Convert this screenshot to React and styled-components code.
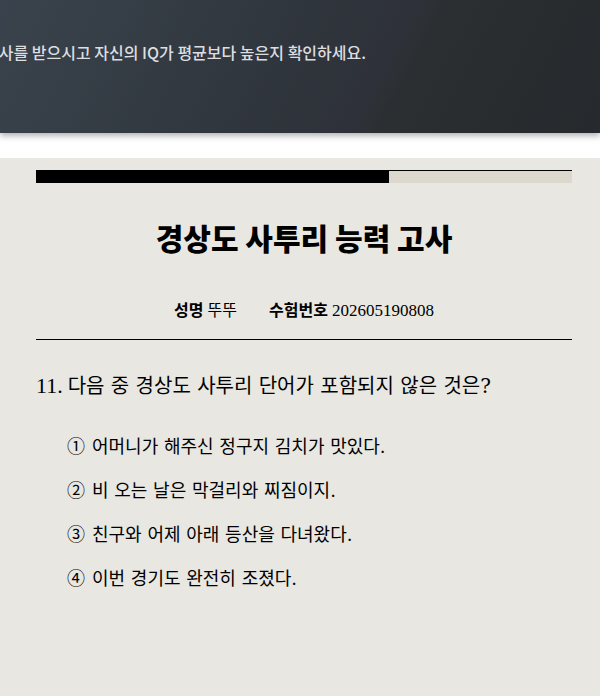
import React from "react";
import styled, { createGlobalStyle } from "styled-components";

const GlobalStyle = createGlobalStyle`
  *, *::before, *::after { box-sizing: border-box; }
  html, body { margin: 0; background: #fff; }
  body, button { font-family: "Liberation Serif", "Noto Sans CJK KR", serif; color: #000; }
`;

const Page = styled.div`
  display: flex;
  flex-direction: column;
  min-height: 100vh;
  gap: 25px;
`;

const Banner = styled.header`
  display: flex;
  justify-content: flex-end;
  overflow: hidden;
  padding: 40px 39% 69px 0;
  background: linear-gradient(118deg, #3a434d 0%, #31383f 38%, #2e3139 62%, #2c2f31 67%, #26292d 100%);
  box-shadow: 0 3px 6px rgba(0, 0, 0, 0.3);
`;

const BannerText = styled.p`
  flex: none;
  margin: 0;
  font: 500 16px/24px "Noto Sans CJK KR", sans-serif;
  white-space: nowrap;
  color: #dcdee0;
`;

const Exam = styled.main`
  flex: 1;
  padding: 12px 28px 40px 36px;
  background: #e8e7e2;
`;

const Progress = styled.div`
  height: 13px;
  border-top: 1px solid #000;
  background: #dcd8cd;
`;

const ProgressFill = styled.div`
  height: 100%;
  background: #000;
`;

const Title = styled.h1`
  margin: 30px 0 38px;
  text-align: center;
  font: 900 30px/48px "Noto Sans CJK KR", sans-serif;
`;

const Candidate = styled.dl`
  display: flex;
  justify-content: center;
  gap: 32px;
  margin: 0;
  padding-bottom: 16px;
  border-bottom: 1px solid #000;
  font-size: 16px;
  line-height: 24px;
`;

const Field = styled.div`
  display: flex;
  gap: 4px;

  dt { font-weight: 700; }
  dd { margin: 0; }
`;

const ExamNumber = styled.dd`
  font-size: 17px;
`;

const Sentence = styled.span`
  font-family: "DejaVu Serif", "Noto Sans CJK KR", serif;
`;

const QuestionNumber = styled.span`
  font-size: 22px;
`;

const Question = styled.h2`
  display: flex;
  align-items: baseline;
  gap: 5px;
  margin: 30px 0 29px;
  font-size: 20px;
  font-weight: 400;
  line-height: 32px;
`;

const Choices = styled.ol`
  display: flex;
  flex-direction: column;
  gap: 12px;
  margin: 0;
  padding: 0 0 0 31px;
  list-style: none;
`;

const Choice = styled.button`
  display: flex;
  gap: 7px;
  padding: 3px 0;
  border: 0;
  background: none;
  font-size: 18px;
  line-height: 26px;
  text-align: left;
  cursor: pointer;
`;

const choices = [
  ["①", "어머니가 해주신 정구지 김치가 맛있다."],
  ["②", "비 오는 날은 막걸리와 찌짐이지."],
  ["③", "친구와 어제 아래 등산을 다녀왔다."],
  ["④", "이번 경기도 완전히 조졌다."],
];

const progress = 65.8;

export default function App() {
  return (
    <>
      <GlobalStyle />
      <Page>
        <Banner>
          <BannerText>사를 받으시고 자신의 IQ가 평균보다 높은지 확인하세요.</BannerText>
        </Banner>
        <Exam>
          <Progress role="progressbar" aria-valuenow={progress} aria-valuemin={0} aria-valuemax={100}>
            <ProgressFill style={{ width: `${progress}%` }} />
          </Progress>
          <Title>경상도 사투리 능력 고사</Title>
          <Candidate>
            <Field><dt>성명</dt><dd>뚜뚜</dd></Field>
            <Field><dt>수험번호</dt><ExamNumber>202605190808</ExamNumber></Field>
          </Candidate>
          <Question>
            <QuestionNumber>11.</QuestionNumber>
            <Sentence>다음 중 경상도 사투리 단어가 포함되지 않은 것은?</Sentence>
          </Question>
          <Choices>
            {choices.map(([mark, text]) => (
              <li key={mark}>
                <Choice type="button">
                  <span>{mark}</span>
                  <Sentence>{text}</Sentence>
                </Choice>
              </li>
            ))}
          </Choices>
        </Exam>
      </Page>
    </>
  );
}
